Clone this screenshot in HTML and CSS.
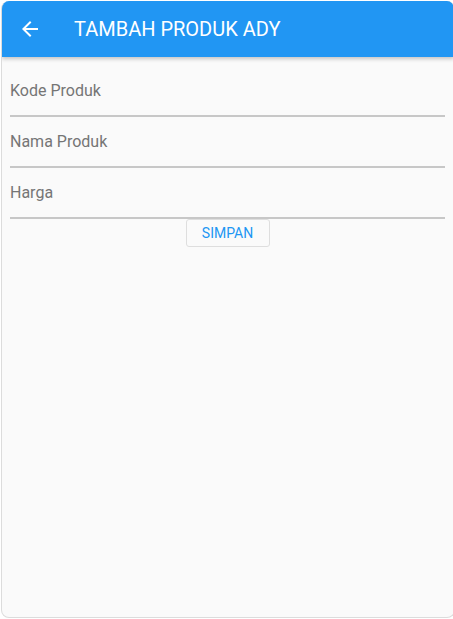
FILE: index.html
```html
<!DOCTYPE html>
<html>
<head>
<meta charset="utf-8">
<link rel="stylesheet" href="styles.css">
</head>
<body>
<div class="window">
  <header class="appbar">
    <button class="back" aria-label="back">
      <svg width="24" height="24" viewBox="0 0 24 24"><path d="M20 11H7.83l5.59-5.59L12 4l-8 8 8 8 1.41-1.41L7.83 13H20v-2z" fill="#fff"/></svg>
    </button>
    <h1 class="title">TAMBAH PRODUK ADY</h1>
  </header>
  <main class="form">
    <div class="field"><span class="label">Kode Produk</span></div>
    <div class="field"><span class="label">Nama Produk</span></div>
    <div class="field"><span class="label">Harga</span></div>
    <div class="actions"><button class="btn">SIMPAN</button></div>
  </main>
</div>
</body>
</html>
```
FILE: styles.css
```css
html, body {
  margin: 0;
  padding: 0;
  background: #fff;
  overflow: hidden;
  font-family: Roboto, "Liberation Sans", sans-serif;
}
.window {
  margin: 1px 0 0 1px;
  width: 454px;
  height: 617px;
  border: 1px solid #dcdcdc;
  border-top: none;
  border-radius: 8px;
  overflow: hidden;
  background: #fafafa;
  box-sizing: border-box;
}
.appbar {
  height: 56px;
  background: #2196f3;
  display: flex;
  align-items: center;
  box-shadow: 0 2px 4px rgba(0,0,0,0.22);
  position: relative;
}
.back {
  width: 24px;
  height: 24px;
  margin-left: 16px;
  padding: 0;
  border: none;
  background: none;
  display: flex;
}
.title {
  margin: 0 0 0 32px;
  color: #fff;
  font-size: 20px;
  font-weight: 400;
  letter-spacing: 0;
}
.form {
  padding: 9px 9px 0 8px;
}
.field {
  border-bottom: 2px solid #c7c7c7;
  padding-top: 17px;
  box-sizing: content-box;
  height: 32px;
}
.label {
  display: block;
  font-size: 16px;
  line-height: 16px;
  color: #757575;
}
.actions {
  display: flex;
  justify-content: center;
}
.btn {
  width: 84px;
  height: 28px;
  background: #fafafa;
  border: 1px solid #dedede;
  border-radius: 3px;
  color: #2196f3;
  font-family: Roboto, "Liberation Sans", sans-serif;
  font-size: 14px;
  padding: 0;
}
```
